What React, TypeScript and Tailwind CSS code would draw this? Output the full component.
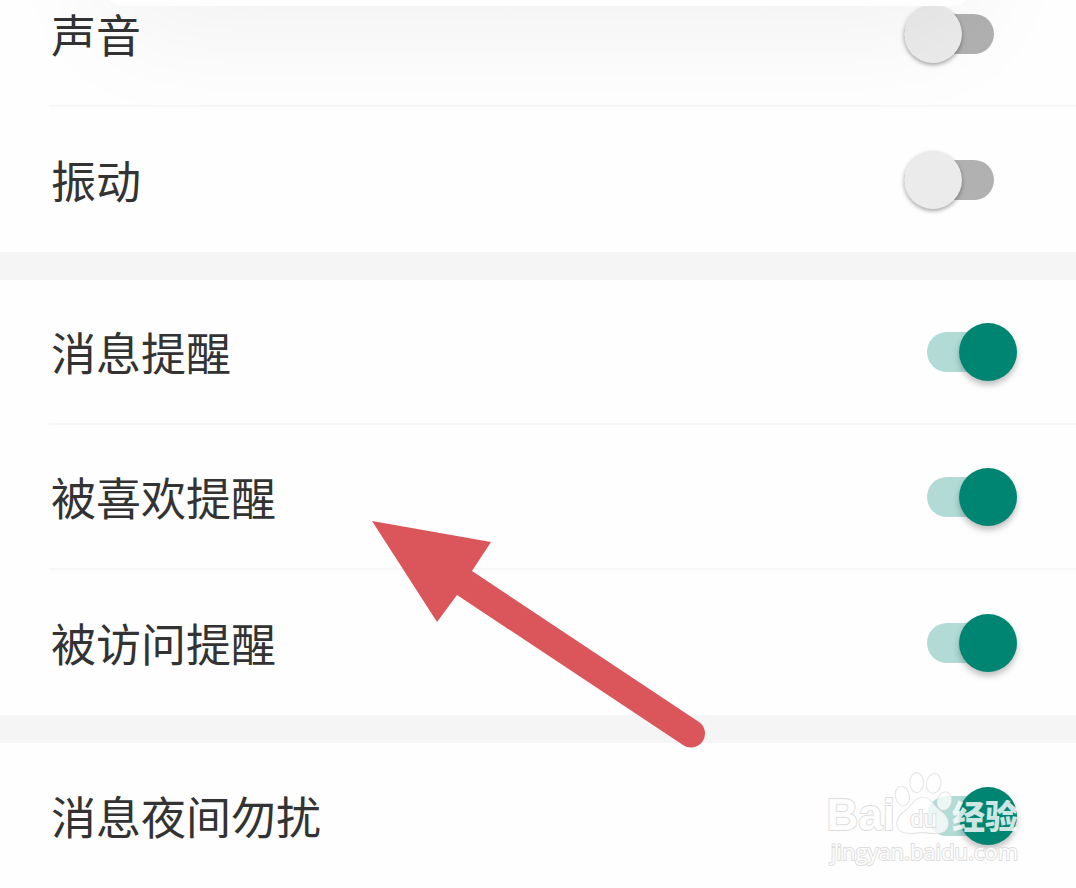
import { useState } from 'react';
import clsx from 'clsx';

type Setting = {
  id: string;
  label: string;
  on: boolean;
};

const GROUPS: Setting[][] = [
  [
    { id: 'sound', label: '声音', on: false },
    { id: 'vibrate', label: '振动', on: false },
  ],
  [
    { id: 'message', label: '消息提醒', on: true },
    { id: 'liked', label: '被喜欢提醒', on: true },
    { id: 'visited', label: '被访问提醒', on: true },
  ],
  [{ id: 'night', label: '消息夜间勿扰', on: true }],
];

function SettingRow({ setting, divider }: { setting: Setting; divider: boolean }) {
  const [on, setOn] = useState(setting.on);

  return (
    <li className={clsx('ml-[49px] h-[145px]', divider && 'border-b-2 border-[#f7f7f7]')}>
      <label
        htmlFor={setting.id}
        className={clsx('flex h-full items-center justify-between pl-[2px]', on ? 'pr-[59px]' : 'pr-[82px]')}
      >
        <span className="text-[45px] leading-[64px] text-[#333]">{setting.label}</span>
        <input
          id={setting.id}
          type="checkbox"
          role="switch"
          checked={on}
          onChange={(e) => setOn(e.target.checked)}
          className={clsx(
            'relative h-10 w-[90px] shrink-0 appearance-none rounded-full',
            'before:absolute before:-top-[9px] before:size-[58px] before:rounded-full',
            on
              ? 'bg-[#b2dbd6] before:right-0 before:bg-[#008573] before:shadow-[0_4px_6px_rgba(0,0,0,0.25)]'
              : 'bg-[#b1b1b1] before:left-0 before:bg-[#ebebeb] before:shadow-[0_2px_4px_rgba(0,0,0,0.35)]'
          )}
        />
      </label>
    </li>
  );
}

function Arrow() {
  return (
    <svg
      viewBox="0 0 340 232"
      className="pointer-events-none absolute left-[368px] top-[518px] w-[340px]"
      aria-hidden="true"
    >
      <path
        d="M4 3 L123 24 L104 53 L331 204 A14 14 0 0 1 315 227 L89 77 L69 104 Z"
        fill="#db565b"
      />
    </svg>
  );
}

function Watermark() {
  return (
    <div className="pointer-events-none absolute right-[58px] top-[771px] text-white/90 [-webkit-text-stroke:2px_#dedede] [paint-order:stroke]">
      <div className="flex h-16 items-end">
        <span className="font-['Liberation_Sans',sans-serif] text-[44px] font-bold leading-[40px]">Bai</span>
        <span className="relative">
          <svg viewBox="0 0 171 190" className="w-[57px]" aria-hidden="true">
            <g fill="#fff" fillOpacity="0.75" stroke="#dedede" strokeWidth="4">
              <ellipse cx="22" cy="72" rx="20" ry="29" transform="rotate(-12 22 72)" />
              <ellipse cx="65" cy="32" rx="20" ry="29" />
              <ellipse cx="116" cy="34" rx="21" ry="29" transform="rotate(10 116 34)" />
              <ellipse cx="148" cy="87" rx="20" ry="27" transform="rotate(16 148 87)" />
              <path d="M83 76 C58 76 56 98 32 116 C-8 142 0 184 44 184 C64 184 70 181 83 181 C96 181 102 184 122 184 C166 184 172 142 134 116 C110 98 108 76 83 76 Z" />
            </g>
          </svg>
          <span className="absolute inset-x-0 bottom-1 text-center font-['Liberation_Sans',sans-serif] text-2xl leading-6">
            du
          </span>
        </span>
        <span className="text-[33px] font-black leading-10 text-white/80 [-webkit-text-stroke:0px]">经验</span>
      </div>
      <div className="text-right font-['Open_Sans',sans-serif] text-[22px] leading-8">jingyan.baidu.com</div>
    </div>
  );
}

export default function App() {
  return (
    <div className="relative min-h-screen overflow-hidden bg-[#fefefe] font-['Noto_Sans_CJK_SC',sans-serif]">
      {/* list is scrolled a little under the panel above */}
      <main className="-mt-[38px] divide-y-[28px] divide-[#f5f5f5]">
        {GROUPS.map((group) => (
          <ul key={group[0].id}>
            {group.map((setting, i) => (
              <SettingRow key={setting.id} setting={setting} divider={i < group.length - 1} />
            ))}
          </ul>
        ))}
      </main>
      <div className="pointer-events-none absolute inset-x-[106px] -top-[194px] h-[200px] rounded-2xl bg-[#fefefe] shadow-[0_20px_120px_rgba(0,0,0,0.06)]" />
      <Arrow />
      <Watermark />
    </div>
  );
}
